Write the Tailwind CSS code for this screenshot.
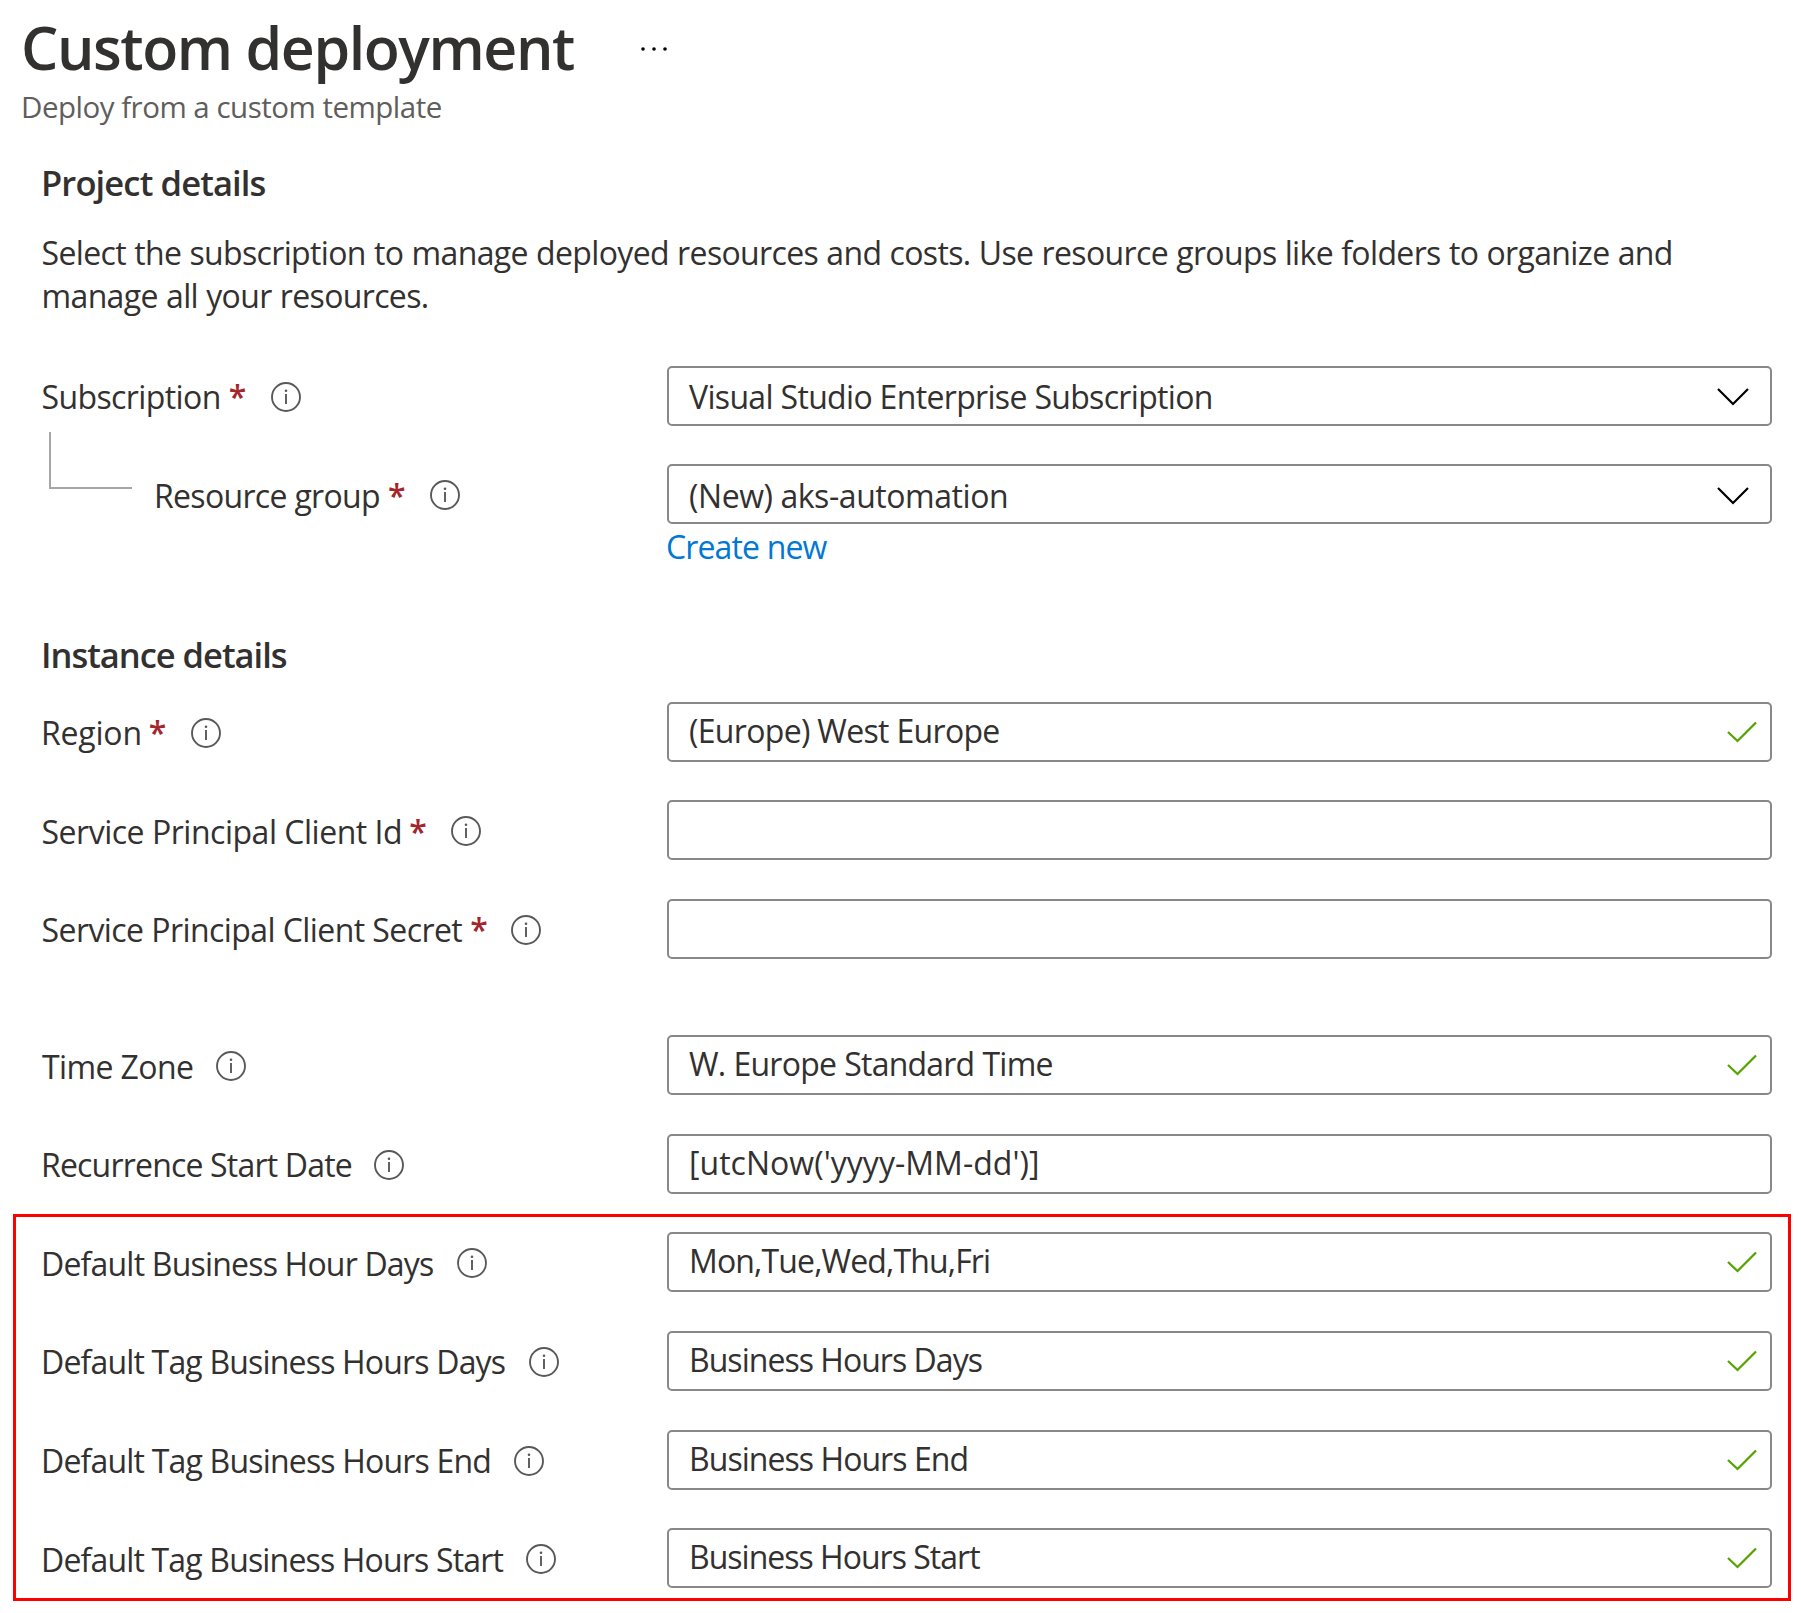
<!DOCTYPE html>
<html lang="en">
<head>
<meta charset="utf-8">
<title>Custom deployment</title>
<script src="https://cdn.jsdelivr.net/npm/@tailwindcss/browser@4"></script>
</head>
<body class="bg-white text-[#323130] font-['Open_Sans',sans-serif] text-[32px] whitespace-nowrap overflow-hidden">
<svg class="hidden">
  <symbol id="info" viewBox="0 0 30 30"><circle cx="15" cy="15" r="14" fill="none" stroke="#5a5958" stroke-width="1.9"/><path d="M15 12v10" stroke="#5a5958" stroke-width="1.9"/><circle cx="15" cy="8.8" r="1.3" fill="#5a5958"/></symbol>
  <symbol id="chevron" viewBox="0 0 34 20"><path d="M2 2l15 15 15-15" fill="none" stroke="#000" stroke-width="2.2"/></symbol>
  <symbol id="check" viewBox="0 0 32 24"><path d="M2 12l9.5 9L30 2.5" fill="none" stroke="#57a300" stroke-width="2.3"/></symbol>
</svg>

<header class="pt-[7px] pl-[21px]">
  <div class="flex items-start">
    <h1 class="w-[619px] text-[59px] leading-[80px] font-semibold tracking-[-1.43px]">Custom deployment</h1>
    <svg class="mt-[38px] w-7 h-2" viewBox="0 0 28 8"><circle cx="3" cy="4" r="1.8"/><circle cx="14" cy="4" r="1.8"/><circle cx="25" cy="4" r="1.8"/></svg>
  </div>
  <p class="text-[29.5px] leading-10 tracking-[-0.5px] text-[#605e5c]">Deploy from a custom template</p>
</header>

<main>
  <section class="pl-10">
    <h2 class="mt-8 pl-px text-[34.5px] leading-[48px] font-semibold tracking-[-0.86px]">Project details</h2>
    <p class="mt-[24px] pl-[1.5px] leading-[43px] tracking-[-0.64px] [word-spacing:0.5px]">Select the subscription to manage deployed resources and costs. Use resource groups like folders to organize and<br>manage all your resources.</p>

    <div class="mt-[49px] h-[60px] flex">
      <div class="relative w-[627px] pl-[1.5px] flex leading-[62px]">
        <span class="tracking-[-0.6px]">Subscription</span><span class="ml-[8px] w-[18px] font-semibold text-[#a4262c]">*</span><svg class="ml-6 mt-[15.5px] size-[30px]"><use href="#info"/></svg>
        <div class="absolute left-[9px] top-[66px] w-[83px] h-[57px] border-l-2 border-b-2 border-[#a6a6a6]"></div>
      </div>
      <div class="w-[1105px] border-2 border-[#8a8886] rounded-[5px] pt-0.5 pl-[20px] pr-[20px] flex justify-between items-center">
        <span class="tracking-[-0.67px]">Visual Studio Enterprise Subscription</span><svg class="w-[34px] h-5"><use href="#chevron"/></svg>
      </div>
    </div>

    <div class="mt-[38px] h-[60px] flex">
      <div class="w-[627px] pl-[114px] flex leading-[64px]">
        <span class="tracking-[-0.68px]">Resource group</span><span class="ml-[8px] w-[18px] font-semibold text-[#a4262c]">*</span><svg class="ml-6 mt-[16px] size-[30px]"><use href="#info"/></svg>
      </div>
      <div class="w-[1105px] border-2 border-[#8a8886] rounded-[5px] pt-[3px] pl-[20px] pr-[20px] flex justify-between items-center">
        <span class="tracking-[-0.44px]">(New) aks-automation</span><svg class="w-[34px] h-5"><use href="#chevron"/></svg>
      </div>
    </div>
    <a class="block ml-[626px] pt-px leading-[43px] tracking-[-0.86px] text-[#0078d4]">Create new</a>
  </section>

  <section>
    <h2 class="ml-[41px] mt-[63px] text-[34.5px] leading-[48px] font-semibold tracking-[-1.02px]">Instance details</h2>

    <div class="ml-10 mt-[23px] h-[60px] flex">
      <div class="w-[627px] pl-px flex leading-[62px]">
        <span class="tracking-[-0.2px]">Region</span><span class="ml-[7px] w-[18px] font-semibold text-[#a4262c]">*</span><svg class="ml-6 mt-[15.5px] size-[30px]"><use href="#info"/></svg>
      </div>
      <div class="w-[1105px] border-2 border-[#8a8886] rounded-[5px] pb-0.5 pl-[20px] pr-[12px] flex justify-between items-center">
        <span class="tracking-[-0.68px]">(Europe) West Europe</span><svg class="mt-px w-8 h-6"><use href="#check"/></svg>
      </div>
    </div>

    <div class="ml-10 mt-[38px] h-[60px] flex">
      <div class="w-[627px] pl-[1.5px] flex leading-[64px]">
        <span class="tracking-[-0.48px]">Service Principal Client Id</span><span class="ml-[7px] w-[18px] font-semibold text-[#a4262c]">*</span><svg class="ml-6 mt-[16px] size-[30px]"><use href="#info"/></svg>
      </div>
      <div class="w-[1105px] border-2 border-[#8a8886] rounded-[5px]"></div>
    </div>

    <div class="ml-10 mt-[39px] h-[60px] flex">
      <div class="w-[627px] pl-[1.5px] flex leading-[62px]">
        <span class="tracking-[-0.57px]">Service Principal Client Secret</span><span class="ml-[8px] w-[18px] font-semibold text-[#a4262c]">*</span><svg class="ml-[23px] mt-[15.5px] size-[30px]"><use href="#info"/></svg>
      </div>
      <div class="w-[1105px] border-2 border-[#8a8886] rounded-[5px]"></div>
    </div>

    <div class="ml-10 mt-[76px] h-[60px] flex">
      <div class="w-[627px] pl-[2px] flex leading-[64px]">
        <span class="tracking-[-0.6px]">Time Zone</span><svg class="ml-[23px] mt-[16px] size-[30px]"><use href="#info"/></svg>
      </div>
      <div class="w-[1105px] border-2 border-[#8a8886] rounded-[5px] pb-0.5 pl-[20px] pr-[12px] flex justify-between items-center">
        <span class="tracking-[-0.78px] [word-spacing:0.6px]">W. Europe Standard Time</span><svg class="mt-px w-8 h-6"><use href="#check"/></svg>
      </div>
    </div>

    <div class="ml-10 mt-[39px] h-[60px] flex">
      <div class="w-[627px] pl-px flex leading-[62px]">
        <span class="tracking-[-0.81px]">Recurrence Start Date</span><svg class="ml-[22px] mt-[15.5px] size-[30px]"><use href="#info"/></svg>
      </div>
      <div class="w-[1105px] border-2 border-[#8a8886] rounded-[5px] pb-0.5 pl-[20px] flex items-center">
        <span class="tracking-[0.03px]">[utcNow('yyyy-MM-dd')]</span>
      </div>
    </div>

    <div class="ml-[13px] mt-5 w-[1778px] h-[387px] border-3 border-[#ff0000] pt-[15px] pl-6">
      <div class="h-[60px] flex">
        <div class="w-[627px] pl-px flex leading-[64px]">
          <span class="tracking-[-0.8px]">Default Business Hour Days</span><svg class="ml-[23px] mt-[16px] size-[30px]"><use href="#info"/></svg>
        </div>
        <div class="w-[1105px] border-2 border-[#8a8886] rounded-[5px] pb-0.5 pl-[20px] pr-[12px] flex justify-between items-center">
          <span class="tracking-[-0.86px]">Mon,Tue,Wed,Thu,Fri</span><svg class="mt-px w-8 h-6"><use href="#check"/></svg>
        </div>
      </div>
      <div class="mt-[39px] h-[60px] flex">
        <div class="w-[627px] pl-px flex leading-[62px]">
          <span class="tracking-[-0.82px]">Default Tag Business Hours Days</span><svg class="ml-[24px] mt-[15.5px] size-[30px]"><use href="#info"/></svg>
        </div>
        <div class="w-[1105px] border-2 border-[#8a8886] rounded-[5px] pb-0.5 pl-[20px] pr-[12px] flex justify-between items-center">
          <span class="tracking-[-0.97px]">Business Hours Days</span><svg class="mt-px w-8 h-6"><use href="#check"/></svg>
        </div>
      </div>
      <div class="mt-[39px] h-[60px] flex">
        <div class="w-[627px] pl-px flex leading-[62px]">
          <span class="tracking-[-0.81px]">Default Tag Business Hours End</span><svg class="ml-[23px] mt-[15.5px] size-[30px]"><use href="#info"/></svg>
        </div>
        <div class="w-[1105px] border-2 border-[#8a8886] rounded-[5px] pb-0.5 pl-[20px] pr-[12px] flex justify-between items-center">
          <span class="tracking-[-0.95px]">Business Hours End</span><svg class="mt-px w-8 h-6"><use href="#check"/></svg>
        </div>
      </div>
      <div class="mt-[38px] h-[60px] flex">
        <div class="w-[627px] pl-px flex leading-[64px]">
          <span class="tracking-[-0.83px]">Default Tag Business Hours Start</span><svg class="ml-[23px] mt-[16px] size-[30px]"><use href="#info"/></svg>
        </div>
        <div class="w-[1105px] border-2 border-[#8a8886] rounded-[5px] pb-0.5 pl-[20px] pr-[12px] flex justify-between items-center">
          <span class="tracking-[-0.99px]">Business Hours Start</span><svg class="mt-px w-8 h-6"><use href="#check"/></svg>
        </div>
      </div>
    </div>
  </section>
</main>
</body>
</html>
